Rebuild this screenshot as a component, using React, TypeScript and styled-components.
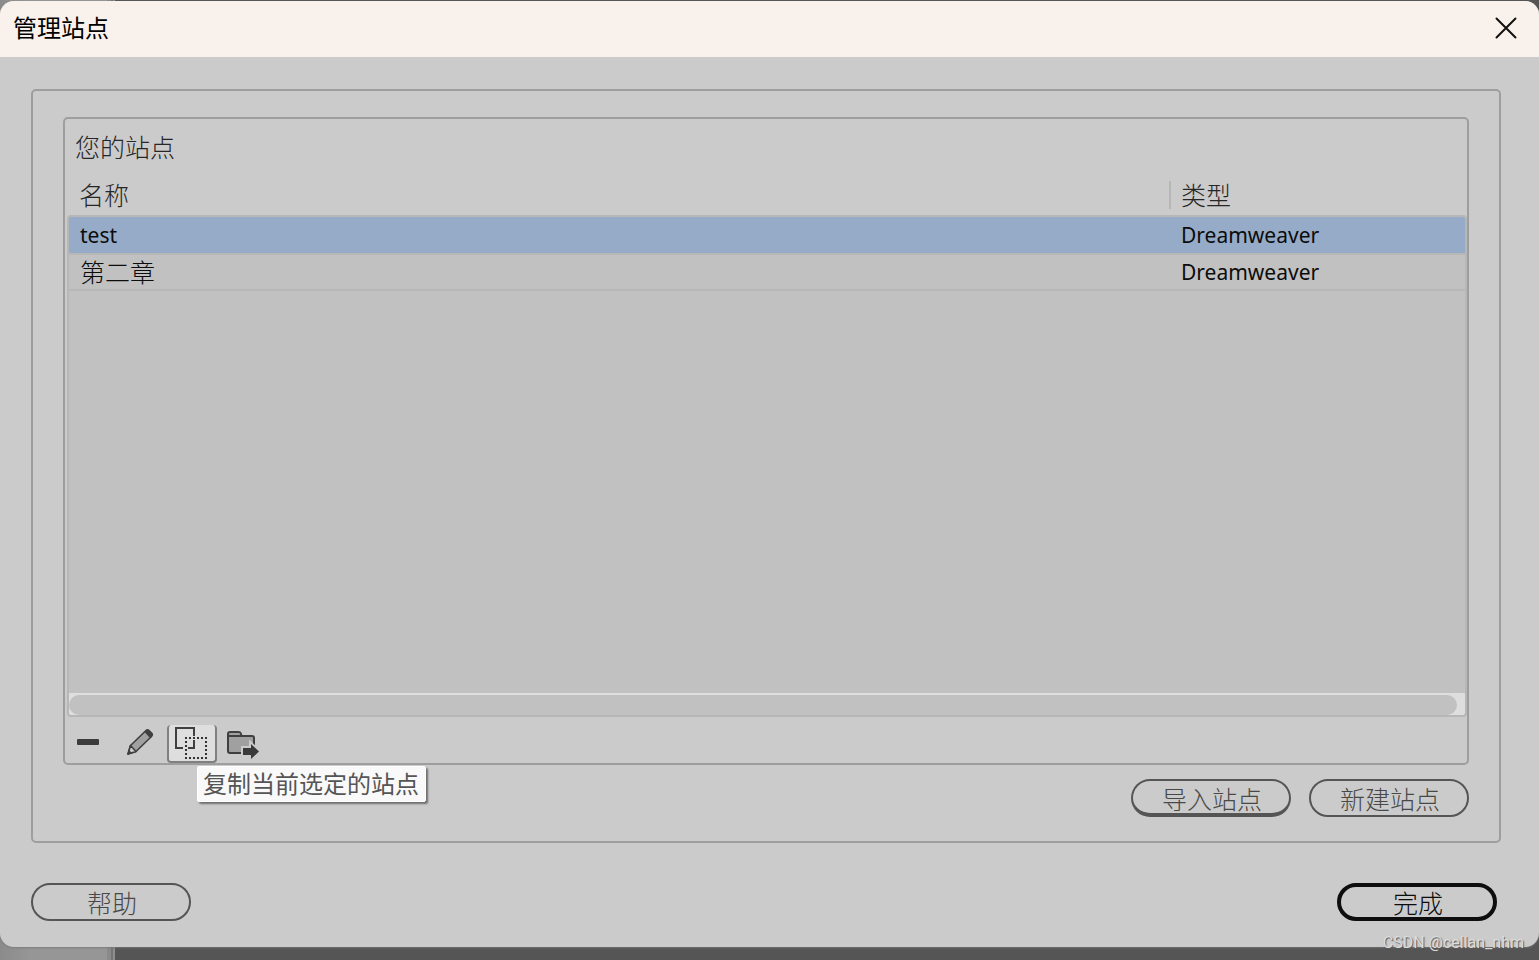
import React from 'react';
import styled, { createGlobalStyle, css } from 'styled-components';

const GlobalStyle = createGlobalStyle`
  *, *::before, *::after { box-sizing: border-box; }
  body {
    margin: 0;
    font-family: 'Noto Sans', 'Noto Sans CJK SC', sans-serif;
  }
  button { font-family: inherit; cursor: pointer; }
`;

const Backdrop = styled.div`
  position: relative;
  display: flex;
  flex-direction: column;
  min-height: 100vh;
  padding: 1px 0 13px;
  background: linear-gradient(to right, #8b8b8b 0, #969696 30px, #969696 107px, #8a8a8a 107px 111px, #747474 111px 113px, #8e8e8e 113px 115px, #555 115px);
`;

const Dialog = styled.main`
  flex: 1;
  display: flex;
  flex-direction: column;
  background: #cbcbcb;
  border-radius: 14px;
  overflow: hidden;
  box-shadow: 0 1px 2px rgba(120, 120, 120, 0.8);
`;

const TitleBar = styled.header`
  display: flex;
  align-items: center;
  justify-content: space-between;
  height: 56px;
  padding: 0 13px 2px;
  background: #f9f1ec;
`;

const Title = styled.h1`
  margin: 0;
  font-size: 24px;
  line-height: 32px;
  font-weight: 400;
  color: #000;
`;

const CloseButton = styled.button`
  display: flex;
  align-items: center;
  justify-content: center;
  width: 40px;
  height: 40px;
  padding: 0;
  border: 0;
  background: none;
`;

const Content = styled.div`
  flex: 1;
  display: flex;
  flex-direction: column;
  padding: 32px 38px 26px 31px;
`;

const frame = css`
  display: flex;
  flex-direction: column;
  border: 2px solid #9e9e9e;
  border-radius: 5px;
`;

const OuterFrame = styled.div`
  ${frame}
  flex: 1;
  padding: 26px 30px 24px;
`;

const SitesFrame = styled.section`
  ${frame}
  flex: 1;
`;

const SectionTitle = styled.h2`
  margin: 0;
  padding: 0 10px;
  font-size: 25px;
  line-height: 56px;
  font-weight: 300;
  color: #262626;
`;

const SiteTable = styled.table`
  flex: 1;
  display: flex;
  flex-direction: column;
  margin: 0 0 0 2px;
`;

const TableHead = styled.thead`
  display: block;
  padding: 0 2px;
`;

const TableBody = styled.tbody`
  flex: 1;
  display: block;
  background: #c1c1c1;
  border: 2px solid #b7b7b7;
  border-bottom: 0;
  border-radius: 4px 4px 0 0;
  overflow: hidden;
`;

const columns = css`
  display: grid;
  grid-template-columns: 1fr 296px;
  align-items: center;
`;

const HeadRow = styled.tr`
  ${columns}
  height: 40px;
`;

const HeadCell = styled.th<{ $divided?: boolean }>`
  padding: 0 10px;
  border-left: ${(p) => (p.$divided ? '2px solid #b7b7b7' : '0')};
  font-size: 25px;
  line-height: 28px;
  font-weight: 300;
  text-align: left;
  color: #262626;
`;

const SiteRow = styled.tr<{ $selected?: boolean }>`
  ${columns}
  height: ${(p) => (p.$selected ? 38 : 36)}px;
  border-bottom: 2px solid #b7b7b7;
  background: ${(p) => (p.$selected ? '#95abc7' : 'transparent')};
  background-clip: padding-box;
`;

const SiteCell = styled.td<{ $cjk?: boolean; $indent?: boolean }>`
  padding: 0 ${(p) => (p.$indent ? 12 : 11)}px;
  font-size: ${(p) => (p.$cjk ? 25 : 21)}px;
  line-height: 34px;
  font-weight: ${(p) => (p.$cjk ? 300 : 400)};
  color: #0c0c0c;
`;

const ScrollTrack = styled.div`
  height: 24px;
  margin-left: 2px;
  padding: 2px 8px 0 0;
  background: #dedede;
  border: 2px solid #b7b7b7;
  border-top: 0;
  border-radius: 0 0 4px 4px;
`;

const ScrollThumb = styled.div`
  height: 20px;
  border-radius: 10px;
  background: #c1c1c1;
`;

const Toolbar = styled.div`
  display: flex;
  gap: 2px;
  height: 46px;
  margin-left: -2px;
  padding-top: 8px;
`;

const ToolSlot = styled.div`
  position: relative;
`;

const ToolButton = styled.button<{ $active?: boolean }>`
  display: block;
  width: 50px;
  height: 38px;
  padding: 0;
  border: 2px solid ${(p) => (p.$active ? '#808080' : 'transparent')};
  border-top: 0;
  border-radius: 4px;
  background: ${(p) => (p.$active ? '#dedede' : 'none')};
  svg { display: block; }
`;

const Tooltip = styled.div`
  position: absolute;
  top: 41px;
  left: 30px;
  padding: 0 6px 0 5px;
  border: 1px solid #fff;
  border-radius: 2px;
  background: #f9f9f9;
  box-shadow: 2px 2px 2px #6e6e6e;
  font-size: 24px;
  line-height: 34px;
  white-space: nowrap;
  color: #555;
`;

const SiteActions = styled.div`
  display: flex;
  justify-content: flex-end;
  gap: 18px;
  margin-top: 14px;
`;

const Footer = styled.footer`
  display: flex;
  justify-content: space-between;
  margin-top: 40px;
  padding-right: 4px;
`;

const PillButton = styled.button<{ $kind?: 'hovered' | 'primary' }>`
  display: flex;
  align-items: center;
  justify-content: center;
  width: 160px;
  height: 38px;
  padding: ${(p) => (p.$kind === 'hovered' ? 4 : 2)}px 0 0 2px;
  border: ${(p) => (p.$kind === 'primary' ? '4px solid #0e0e0e' : '2px solid #555')};
  border-bottom-width: ${(p) => (p.$kind ? 4 : 2)}px;
  border-radius: 19px;
  background: none;
  font-size: 25px;
  line-height: 28px;
  font-weight: 300;
  color: ${(p) => (p.$kind === 'primary' ? '#0c0c0c' : '#484848')};
`;

const Watermark = styled.div`
  position: absolute;
  right: 15px;
  bottom: 8px;
  font-family: Roboto, sans-serif;
  font-size: 16px;
  line-height: 18px;
  color: #dcdcdc;
  text-shadow: 1px 1px 1px #555;
`;

const RemoveIcon = () => (
  <svg width="46" height="36" viewBox="0 0 46 36" aria-hidden="true">
    <rect x="12" y="14" width="22" height="6" rx="1" fill="#3c3c3c" />
  </svg>
);

const EditIcon = () => (
  <svg width="46" height="36" viewBox="0 0 46 36" aria-hidden="true">
    <path d="M11 29L13.5 20.5L29 5.5Q30.5 4 32 5.5L35 8.5Q36 10 34.5 11.5L19 26.5Z" fill="#a0a0a0" stroke="#3f3f3f" strokeWidth="1.6" strokeLinejoin="round" />
    <path d="M27.5 7L29 5.5Q30.5 4 32 5.5L35 8.5Q36 10 34.5 11.5L33 13Z" fill="#3f3f3f" />
    <path d="M11 29L13.5 20.5L19 26.5Z" fill="#cbcbcb" stroke="#3f3f3f" strokeWidth="1.6" strokeLinejoin="round" />
    <path d="M10.5 29.5L12 25L15 28Z" fill="#3f3f3f" />
  </svg>
);

const DuplicateIcon = () => (
  <svg width="46" height="36" viewBox="0 0 46 36" aria-hidden="true" shapeRendering="crispEdges">
    <path d="M14 23H7V3H25V11M25 15V23H19" fill="none" stroke="#3f3f3f" strokeWidth="2" />
    <path d="M16 13H38M16 33H38" fill="none" stroke="#333" strokeWidth="2" strokeDasharray="2 2" />
    <path d="M17 16V32M37 16V32" fill="none" stroke="#333" strokeWidth="2" strokeDasharray="2 2" />
  </svg>
);

const ExportIcon = () => (
  <svg width="46" height="36" viewBox="0 0 46 36" aria-hidden="true">
    <path d="M7 26V9Q7 7 9 7H18Q19.500 7 20 9L20.500 11H31Q33 11 33 13V26Q33 28 31 28H9Q7 28 7 26Z" fill="#a0a0a0" stroke="#3f3f3f" strokeWidth="2" />
    <path d="M7 11H21" fill="none" stroke="#3f3f3f" strokeWidth="2" />
    <path d="M22 23H30V19L37.500 26.500L30 34V30H22Z" fill="#3a3a3a" stroke="#cbcbcb" strokeWidth="4" />
    <path d="M22 23H30V19L38 26.500L30 34V30H22Z" fill="#3a3a3a" />
  </svg>
);

const CloseIcon = () => (
  <svg width="22" height="22" viewBox="0 0 22 22" aria-hidden="true">
    <path d="M1.500 1.500L20.500 20.500M20.500 1.500L1.500 20.500" stroke="#111" strokeWidth="2" strokeLinecap="round" />
  </svg>
);

const sites = [
  { name: 'test', type: 'Dreamweaver', cjk: false },
  { name: '第二章', type: 'Dreamweaver', cjk: true },
];

export default function App() {
  return (
    <>
      <GlobalStyle />
      <Backdrop>
        <Dialog>
          <TitleBar>
            <Title>管理站点</Title>
            <CloseButton type="button" aria-label="关闭">
              <CloseIcon />
            </CloseButton>
          </TitleBar>
          <Content>
            <OuterFrame>
              <SitesFrame>
                <SectionTitle id="sites-title">您的站点</SectionTitle>
                <SiteTable aria-labelledby="sites-title">
                  <TableHead>
                    <HeadRow>
                      <HeadCell scope="col">名称</HeadCell>
                      <HeadCell scope="col" $divided>类型</HeadCell>
                    </HeadRow>
                  </TableHead>
                  <TableBody>
                    {sites.map((site, i) => (
                      <SiteRow key={site.name} $selected={i === 0} aria-selected={i === 0}>
                        <SiteCell $cjk={site.cjk}>{site.name}</SiteCell>
                        <SiteCell $indent>{site.type}</SiteCell>
                      </SiteRow>
                    ))}
                  </TableBody>
                </SiteTable>
                <ScrollTrack>
                  <ScrollThumb />
                </ScrollTrack>
                <Toolbar>
                  <ToolButton type="button" aria-label="删除当前选定的站点"><RemoveIcon /></ToolButton>
                  <ToolButton type="button" aria-label="编辑当前选定的站点"><EditIcon /></ToolButton>
                  <ToolSlot>
                    <ToolButton type="button" $active aria-labelledby="duplicate-tip"><DuplicateIcon /></ToolButton>
                    <Tooltip role="tooltip" id="duplicate-tip">复制当前选定的站点</Tooltip>
                  </ToolSlot>
                  <ToolButton type="button" aria-label="导出当前选定的站点"><ExportIcon /></ToolButton>
                </Toolbar>
              </SitesFrame>
              <SiteActions>
                <PillButton type="button" $kind="hovered">导入站点</PillButton>
                <PillButton type="button">新建站点</PillButton>
              </SiteActions>
            </OuterFrame>
            <Footer>
              <PillButton type="button">帮助</PillButton>
              <PillButton type="button" $kind="primary">完成</PillButton>
            </Footer>
          </Content>
        </Dialog>
        <Watermark>CSDN @cellan_nhm</Watermark>
      </Backdrop>
    </>
  );
}
